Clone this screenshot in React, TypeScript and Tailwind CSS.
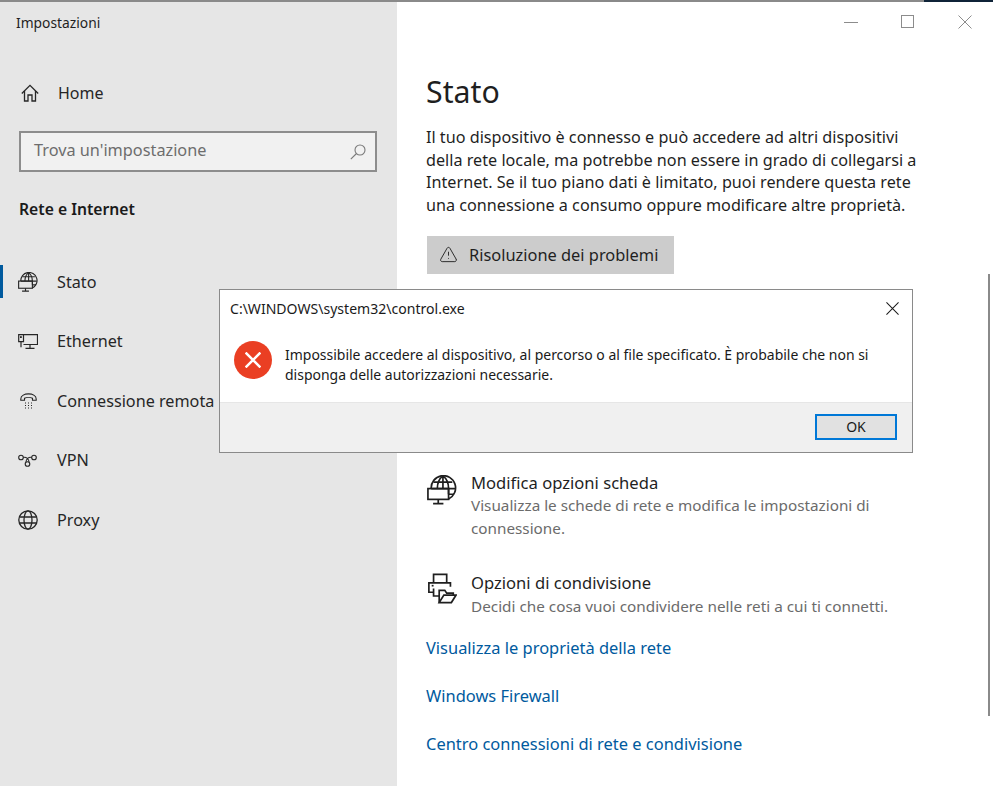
import React from 'react';
import { AlertTriangle } from 'lucide-react';

const font = 'font-["Noto_Sans","Open_Sans",sans-serif]';

function CloseGlyph({ className, strokeWidth = 1 }: { className?: string; strokeWidth?: number }) {
    return (
        <svg viewBox="0 0 14 14" fill="none" stroke="currentColor" strokeWidth={strokeWidth} className={className}>
            <path d="M0.500 0.500l13 13M13.500 0.500l-13 13" />
        </svg>
    );
}

function HomeGlyph({ className }: { className?: string }) {
    return (
        <svg viewBox="0 0 18 18" fill="none" stroke="currentColor" strokeWidth="1.300" className={className}>
            <path d="M0.800 9.500L9 1.300l8.200 8.200" />
            <path d="M3.500 7v10H7v-6h4v6h3.500V7" />
        </svg>
    );
}

function SearchGlyph({ className }: { className?: string }) {
    return (
        <svg viewBox="0 0 16 16" fill="none" stroke="currentColor" strokeWidth="1.100" className={className}>
            <circle cx="10" cy="6" r="5" />
            <path d="M6.500 9.500L0.800 15.200" />
        </svg>
    );
}

function GlobeStatus({ className }: { className?: string }) {
    return (
        <svg viewBox="0 0 32 32" fill="none" stroke="currentColor" strokeWidth="1.800" className={className}>
            <path d="M4.500 14.500A13 13 0 1 1 23 25.500" />
            <path d="M17 1c-4 3-6 8-6 13.500M17 1c4 3 6 8 6 13.500v6M17 1v13.500M7 7.500h20M4.500 14.500h25.500M23 20.500h6" />
            <rect x="1" y="14.500" width="22" height="11.500" />
            <path d="M12 26v4M6.500 30.500h11" />
        </svg>
    );
}

function EthernetIcon({ className }: { className?: string }) {
    return (
        <svg viewBox="0 0 20 15" fill="none" stroke="currentColor" strokeWidth="1.200" className={className}>
            <path d="M5.500 0.700H19.500V10.500H5.500" />
            <path d="M0.700 0.700h4.800v7H0.700z" />
            <rect x="2" y="2.200" width="1.800" height="1.800" fill="currentColor" stroke="none" />
            <path d="M3 7.700v5.500M12 10.500v3.500M7.500 14.300h9" />
        </svg>
    );
}

function DialupIcon({ className }: { className?: string }) {
    return (
        <svg viewBox="0 0 17 16" fill="none" stroke="currentColor" strokeWidth="1.100" className={className}>
            <path d="M0.800 6C0.800 -0.800 16.200 -0.800 16.200 6v1.200h-3.700V5.200c-2-1-6-1-8 0v2H0.800z" />
            <path d="M5 10h1M8 10h1M11 10h1M5 12.500h1M8 12.500h1M11 12.500h1M5 15h1M8 15h1M11 15h1" />
        </svg>
    );
}

function VpnIcon({ className }: { className?: string }) {
    return (
        <svg viewBox="0 0 19 13" fill="none" stroke="currentColor" strokeWidth="1.100" className={className}>
            <circle cx="3" cy="3.500" r="2.300" />
            <circle cx="16" cy="3.500" r="2.300" />
            <circle cx="9.500" cy="10" r="2.300" />
            <path d="M5.300 3.500c2.500-1 5.500 1 5.800 4.800M13.700 3.500c-2.500-1-5.500 1-5.800 4.800" />
        </svg>
    );
}

function GlobeIcon({ className }: { className?: string }) {
    return (
        <svg viewBox="0 0 20 20" fill="none" stroke="currentColor" strokeWidth="1.300" className={className}>
            <circle cx="10" cy="10" r="9.200" />
            <ellipse cx="10" cy="10" rx="4" ry="9.200" />
            <path d="M1.500 7h17M1.500 13h17" />
        </svg>
    );
}

function SharingIcon({ className }: { className?: string }) {
    return (
        <svg viewBox="0 0 32 32" fill="none" stroke="currentColor" strokeWidth="1.800" className={className}>
            <path d="M7 10V1h14v9" />
            <path d="M7 20H2V10h23v4" />
            <path d="M7 16v8h6" />
            <path d="M5 13h2" />
            <path d="M13 31V18h6l2 3h7v3" />
            <path d="M13 31l5-8h13l-5 8z" />
        </svg>
    );
}

function NavRow({ icon, label, active }: { icon: React.ReactNode; label: string; active?: boolean }) {
    return (
        <div className="h-[59.500px] flex items-center relative">
            {active && <div className="absolute left-0 top-[13px] w-[3px] h-[33px] bg-[#005a9e]" />}
            <div className="w-[57px] pl-[18px] flex items-center">{icon}</div>
            <span className="text-[16.200px] text-[#262626]">{label}</span>
        </div>
    );
}

export default function App() {
    return (
        <div className={`w-[993px] h-[786px] relative overflow-hidden flex bg-white ${font}`}>
            {/* Sidebar */}
            <aside className="w-[397px] h-full bg-[#e6e6e6] flex flex-col shrink-0">
                <div className="pl-[16px] pt-[14px] h-[72px] text-[13.800px] leading-[18px] text-[#1f1f1f]">Impostazioni</div>
                <div className="h-[42px] flex items-center pl-[21px]">
                    <HomeGlyph className="w-[18px] h-[18px] text-[#262626]" />
                    <span className="ml-[19px] text-[16px] text-[#262626]">Home</span>
                </div>
                <div className="mt-[17px] ml-[19px] w-[358px] h-[41px] border-2 border-[#8d8d8d] bg-[#f1f1f1] flex items-center justify-between pl-[13px] pr-[9px]">
                    <span className="text-[16.300px] leading-[22px] -mt-[3px] text-[#6d6d6d]">Trova un'impostazione</span>
                    <SearchGlyph className="w-[16px] h-[16px] text-[#7a7a7a]" />
                </div>
                <div className="mt-[26px] ml-[19px] text-[15.700px] leading-[22px] font-semibold text-[#1a1a1a]">Rete e Internet</div>
                <nav className="mt-[32px] flex flex-col">
                    <NavRow active label="Stato" icon={<GlobeStatus className="w-[20px] h-[20px] text-[#262626]" />} />
                    <NavRow label="Ethernet" icon={<EthernetIcon className="w-[20px] h-[15px] text-[#262626]" />} />
                    <NavRow label="Connessione remota" icon={<DialupIcon className="w-[17px] h-[16px] ml-[2px] text-[#262626]" />} />
                    <NavRow label="VPN" icon={<VpnIcon className="w-[19px] h-[13px] text-[#262626]" />} />
                    <NavRow label="Proxy" icon={<GlobeIcon className="w-[20px] h-[20px] text-[#262626]" />} />
                </nav>
            </aside>

            {/* Main */}
            <main className="flex-1 pl-[29px] pt-[69px] relative">
                <div className="absolute top-[15px] left-[447px] flex items-start gap-[43px] text-[#8c8c8c]">
                    <div className="w-[14px] h-[1px] mt-[7px] bg-[#8c8c8c]" />
                    <div className="w-[13px] h-[13px] border border-[#8c8c8c]" />
                    <CloseGlyph className="w-[14px] h-[14px] ml-[1px]" />
                </div>
                <h1 className="text-[30.300px] leading-[46px] text-[#1f1f1f]">Stato</h1>
                <p className="mt-[11px] text-[16.200px] leading-[22.700px] text-[#1f1f1f] w-[505px]">
                    Il tuo dispositivo è connesso e può accedere ad altri dispositivi della rete locale, ma potrebbe non essere in grado di collegarsi a Internet. Se il tuo piano dati è limitato, puoi rendere questa rete una connessione a consumo oppure modificare altre proprietà.
                </p>
                <div className="mt-[19px] ml-[1px] w-[247px] h-[38px] bg-[#cccccc] flex items-center pl-[12px] gap-[11px]">
                    <AlertTriangle className="w-[19px] h-[19px] text-[#262626]" strokeWidth={1.200} />
                    <span className="text-[16.400px] leading-[24px] mt-[1px] text-[#1f1f1f]">Risoluzione dei problemi</span>
                </div>

                <div className="mt-[198px] flex gap-[14px]">
                    <GlobeStatus className="w-[30px] h-[30px] mt-[3px] ml-[1px] text-[#1f1f1f] shrink-0" />
                    <div className="w-[440px]">
                        <div className="text-[16.600px] leading-[22px] text-[#1f1f1f]">Modifica opzioni scheda</div>
                        <div className="text-[15.270px] leading-[23px] text-[#6b6b6b]">Visualizza le schede di rete e modifica le impostazioni di connessione.</div>
                    </div>
                </div>
                <div className="mt-[32px] flex gap-[14px]">
                    <SharingIcon className="w-[30px] h-[31px] mt-[1px] ml-[1px] text-[#1f1f1f] shrink-0" />
                    <div>
                        <div className="text-[16.600px] leading-[22px] text-[#1f1f1f]">Opzioni di condivisione</div>
                        <div className="text-[15.300px] leading-[25px] text-[#6b6b6b]">Decidi che cosa vuoi condividere nelle reti a cui ti connetti.</div>
                    </div>
                </div>
                <div className="mt-[18px] flex flex-col gap-[26px] text-[16.450px] leading-[22px] text-[#005a9e]">
                    <span>Visualizza le proprietà della rete</span>
                    <span>Windows Firewall</span>
                    <span>Centro connessioni di rete e condivisione</span>
                </div>
                <div className="absolute top-[274px] right-[3px] w-[2px] h-[442px] bg-[#8a8a8a]" />
            </main>

            {/* Error dialog */}
            <div className="absolute left-[219px] top-[289px] w-[694px] h-[164px] border border-[#8a8a8a] bg-white flex flex-col">
                <div className="h-[37px] pl-[10px] flex items-center justify-between pr-[13px]">
                    <span className="text-[14.050px] text-[#1a1a1a]">C:\WINDOWS\system32\control.exe</span>
                    <CloseGlyph className="w-[13px] h-[13px] -mt-[1px] text-[#1a1a1a]" strokeWidth={1.100} />
                </div>
                <div className="flex-1 flex pl-[14px] pt-[14px]">
                    <div className="w-[38px] h-[38px] rounded-full bg-[#ea3f23] flex items-center justify-center shrink-0">
                        <CloseGlyph className="w-[16px] h-[16px] text-white" strokeWidth={2.200} />
                    </div>
                    <p className="ml-[13px] mt-[4px] w-[600px] text-[13.970px] leading-[20px] text-[#1a1a1a]">
                        Impossibile accedere al dispositivo, al percorso o al file specificato. È probabile che non si disponga delle autorizzazioni necessarie.
                    </p>
                </div>
                <div className="h-[50px] bg-[#f0f0f0] border-t border-[#e6e6e6] flex items-center justify-end pr-[15px] pb-[2px]">
                    <div className="w-[82px] h-[26px] border-2 border-[#0078d7] bg-[#e1e1e1] flex items-center justify-center text-[14px] text-[#1a1a1a]">OK</div>
                </div>
            </div>

            <div className="absolute top-0 left-0 w-full h-[2px] bg-[#8a8a8a]" />
            <div className="absolute top-0 right-0 w-[69px] h-[2px] bg-[#0f2338]" />
        </div>
    );
}
